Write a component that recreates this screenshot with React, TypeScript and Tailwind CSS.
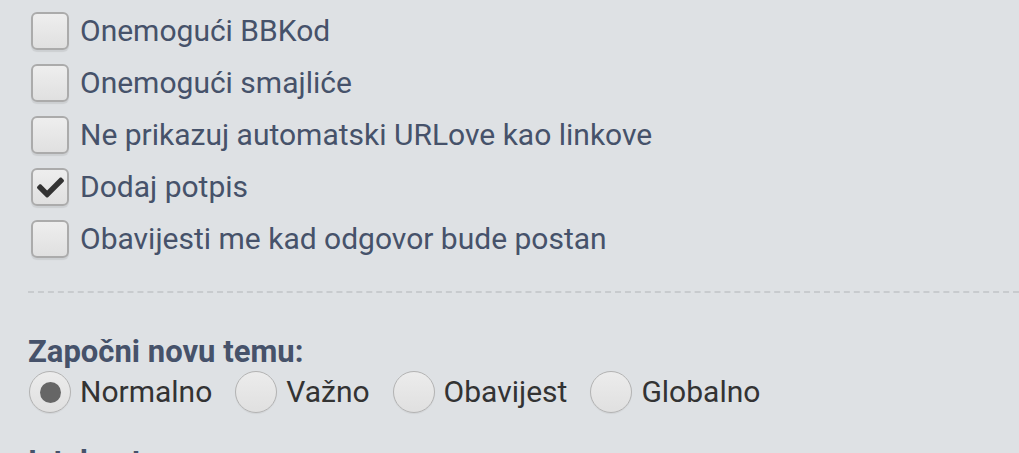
import React, { useState } from 'react';
import { FaCheck } from 'react-icons/fa';

const options = [
  { label: 'Onemogući BBKod', checked: false },
  { label: 'Onemogući smajliće', checked: false },
  { label: 'Ne prikazuj automatski URLove kao linkove', checked: false },
  { label: 'Dodaj potpis', checked: true },
  { label: 'Obavijesti me kad odgovor bude postan', checked: false },
];

const topicTypes = ['Normalno', 'Važno', 'Obavijest', 'Globalno'];

const Checkbox: React.FC<{ checked: boolean }> = ({ checked }) => (
  <span className="flex h-[38px] w-[38px] shrink-0 items-center justify-center rounded-[6px] border-2 border-[#ababab] bg-gradient-to-b from-[#eeeeee] to-[#e0e0e0] shadow-[0_2px_1px_rgba(0,0,0,0.08)]">
    {checked && <FaCheck className="h-[27px] w-[27px] text-[#333]" />}
  </span>
);

const Radio: React.FC<{ checked: boolean }> = ({ checked }) => (
  <span className="flex h-[42px] w-[42px] shrink-0 items-center justify-center rounded-full border border-[#b3b3b3] bg-gradient-to-b from-[#ececec] to-[#e0e0e0] shadow-[0_1px_1px_rgba(0,0,0,0.06)]">
    {checked && <span className="h-[21px] w-[21px] rounded-full bg-[#666666]" />}
  </span>
);

export default function App() {
  const [checks, setChecks] = useState(options.map((o) => o.checked));
  const [topic, setTopic] = useState(0);

  return (
    <div className="h-[453px] w-full overflow-hidden bg-[#dee1e4] pt-[5px] pl-[28px] font-['Roboto',sans-serif]">
      {/* Options */}
      <div className="flex flex-col">
        {options.map((o, i) => (
          <label
            key={o.label}
            className="flex h-[52px] cursor-pointer items-center gap-[11px] pl-[3px]"
            onClick={() => setChecks((c) => c.map((v, j) => (j === i ? !v : v)))}
          >
            <Checkbox checked={checks[i]} />
            <span className="text-[30px] leading-none text-[#46526a]">{o.label}</span>
          </label>
        ))}
      </div>

      <div className="mt-[26px] border-t-2 border-dashed border-[#c8cbce]" />

      {/* Topic type */}
      <div className="mt-[44px]">
        <h3 className="text-[31px] font-bold leading-[30px] text-[#46526a]">Započni novu temu:</h3>
        <div className="mt-[4px] flex items-center pl-[1px]">
          {topicTypes.map((t, i) => (
            <label
              key={t}
              className="mr-[23px] flex cursor-pointer items-center gap-[9px]"
              onClick={() => setTopic(i)}
            >
              <Radio checked={topic === i} />
              <span className="text-[30px] leading-none text-[#333333]">{t}</span>
            </label>
          ))}
        </div>
      </div>

      <h3 className="mt-[34px] text-[31px] font-bold leading-[30px] text-[#46526a]">Istaknuto:</h3>
    </div>
  );
}
